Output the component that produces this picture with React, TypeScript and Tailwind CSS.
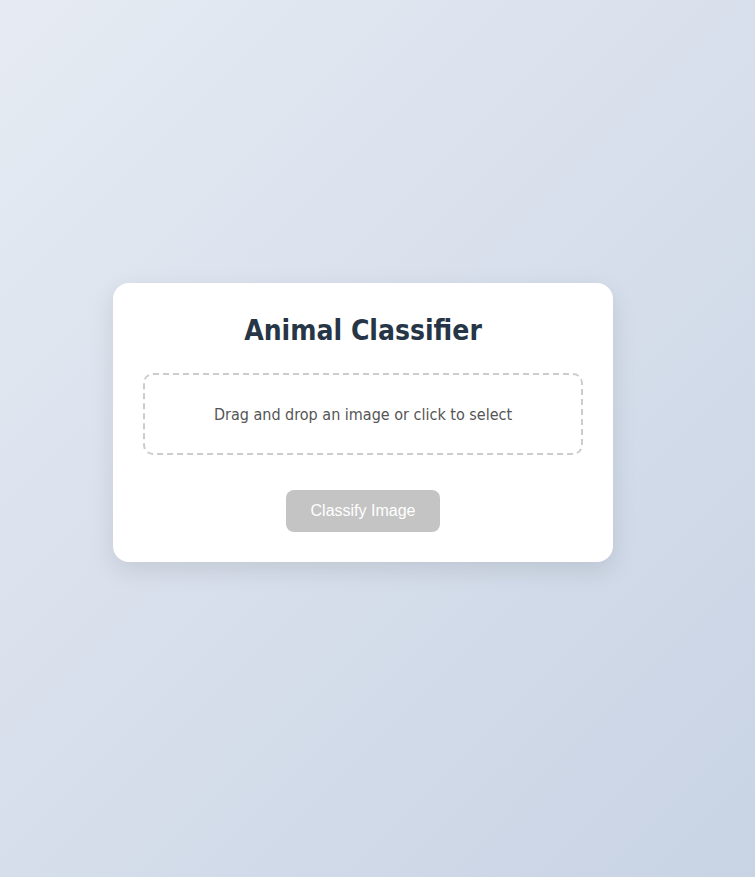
import React from "react";

export default function App() {
  return (
    <div
      className="min-h-screen w-full flex items-center justify-center pr-[29px] pb-[32px] bg-[linear-gradient(135deg,#e6ebf3_0%,#c8d3e4_100%)]"
      style={{ fontFamily: '"DejaVu Sans Condensed", "DejaVu Sans", Verdana, sans-serif' }}
    >
      <div className="w-[500px] bg-white rounded-[16px] p-[30px] shadow-[0_8px_24px_rgba(0,0,0,0.1)] flex flex-col items-center">
        <h1 className="text-[28px] leading-[33px] font-bold text-[#263646] mb-[26px] mt-[1px]">
          Animal Classifier
        </h1>
        <div className="w-full border-2 border-dashed border-[#cccccc] rounded-[10px] pt-[31px] pb-[29px] text-center text-[16px] leading-[18px] text-[#555555] cursor-pointer">
          Drag and drop an image or click to select
        </div>
        <button
          disabled
          className="mt-[35px] bg-[#c4c4c4] text-white text-[16px] leading-[18px] px-[25px] py-[12px] rounded-[8px]"
          style={{ fontFamily: '"Liberation Sans", Arial, sans-serif' }}
        >
          Classify Image
        </button>
      </div>
    </div>
  );
}
